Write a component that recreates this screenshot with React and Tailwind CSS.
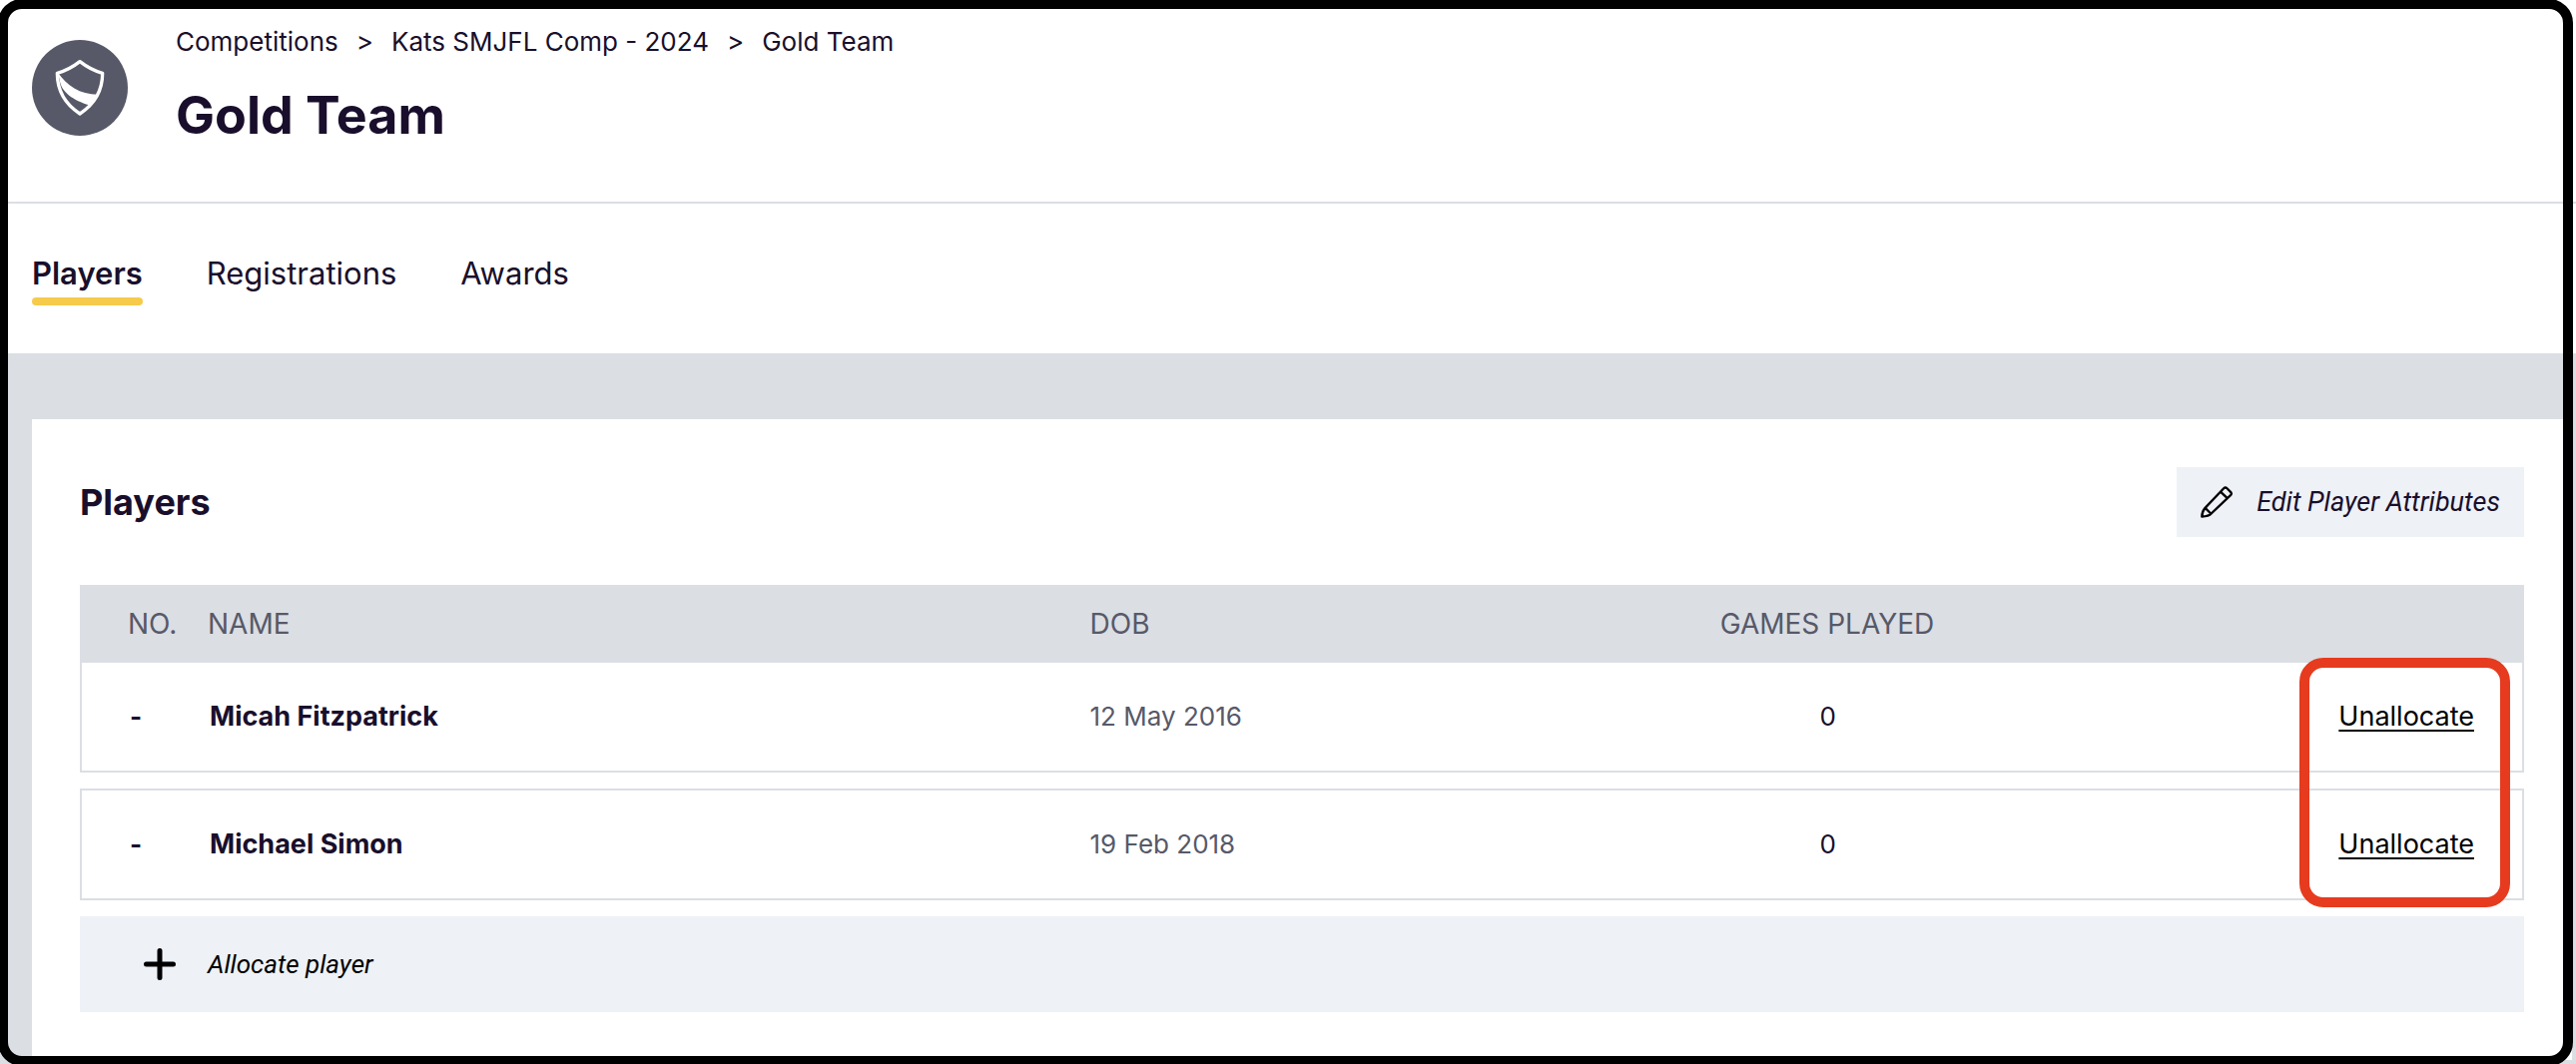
const players = [
  { number: "-", name: "Micah Fitzpatrick", dob: "12 May 2016", games: 0 },
  { number: "-", name: "Michael Simon", dob: "19 Feb 2018", games: 0 },
];

const tabs = ["Players", "Registrations", "Awards"];

function ShieldIcon() {
  return (
    <svg viewBox="144 168 192 192" className="size-16" fill="none" aria-hidden="true">
      <path
        d="M240 185C222 199 198 213 172 220C172 270 194 312 240 342C286 312 308 270 308 220C282 213 258 199 240 185Z"
        stroke="#fff"
        strokeWidth="10"
        strokeLinejoin="round"
      />
      <path d="M174 218C200 256 240 284 294 284L268 316C222 302 184 278 179 240Z" fill="#fff" />
    </svg>
  );
}

function PencilIcon() {
  return (
    <svg
      viewBox="41 31 98 98"
      className="size-8 text-black"
      fill="none"
      stroke="currentColor"
      strokeWidth="7"
      strokeLinejoin="round"
      aria-hidden="true"
    >
      <path d="M55 98L112 38Q117 33 122 38L133 49Q138 54 133 59L73 116Q67 123 45 125Q45 109 55 98Z" />
      <path d="M102 48L123 68M55 98L73 116" />
    </svg>
  );
}

function PlusIcon() {
  return (
    <svg
      viewBox="0 0 32 32"
      className="size-8"
      stroke="currentColor"
      strokeWidth="5"
      strokeLinecap="round"
      aria-hidden="true"
    >
      <path d="M16 2.5V29.5M2.5 16H29.5" />
    </svg>
  );
}

function PageHeader() {
  return (
    <header className="flex gap-12 border-b-2 border-[#dbdee3] bg-white px-8 pt-6 pb-[58px]">
      <div className="mt-4 flex size-24 shrink-0 items-center justify-center rounded-full bg-[#575969]">
        <ShieldIcon />
      </div>
      <div>
        <nav aria-label="Breadcrumb" className="flex gap-[18px] text-[26px] leading-9">
          <a href="#competitions">Competitions</a>
          <span aria-hidden="true">&gt;</span>
          <a href="#competition">Kats SMJFL Comp - 2024</a>
          <span aria-hidden="true">&gt;</span>
          <a href="#team" aria-current="page">Gold Team</a>
        </nav>
        <h1 className="mt-7 text-[52px] leading-14 font-bold">Gold Team</h1>
      </div>
    </header>
  );
}

function TabBar() {
  return (
    <nav aria-label="Team" className="flex gap-16 bg-white px-8 pt-[52px] pb-12 text-[31px] leading-9">
      {tabs.map((tab, i) => (
        <a
          key={tab}
          href={`#${tab.toLowerCase()}`}
          aria-current={i === 0 ? "page" : undefined}
          className={i === 0 ? "font-semibold" : "font-normal"}
        >
          {tab}
          {i === 0 && <span className="mt-1.5 block h-2 rounded-sm bg-[#f6cb4c]" />}
        </a>
      ))}
    </nav>
  );
}

function PlayersTable() {
  return (
    <table className="block">
      <thead className="block bg-[#dbdee3] px-12 text-[28px] leading-9 text-[#575969]">
        <tr className="grid h-[78px] grid-cols-[80px_7fr_5fr_3fr_3fr] items-center text-left">
          <th className="font-normal">NO.</th>
          <th className="font-normal">NAME</th>
          <th className="font-normal">DOB</th>
          <th className="font-normal">GAMES PLAYED</th>
          <th aria-label="Actions" />
        </tr>
      </thead>
      <tbody className="flex flex-col gap-4 text-[26px] leading-9">
        {players.map((p) => (
          <tr
            key={p.name}
            className="grid h-28 grid-cols-[80px_7fr_5fr_3fr_3fr] items-center border-2 border-[#dbdee3] px-[46px] first:h-[110px] first:border-t-0"
          >
            <td className="pl-0.5 font-bold">{p.number}</td>
            <td className="pl-0.5 text-[27px] font-bold">{p.name}</td>
            <td className="text-[#575969]">{p.dob}</td>
            <td>
              <span className="block w-54 text-center">{p.games}</span>
            </td>
            <td className="text-right">
              <button type="button" className="pr-0.5 text-[27px] text-black underline decoration-2 underline-offset-4">
                Unallocate
              </button>
            </td>
          </tr>
        ))}
      </tbody>
    </table>
  );
}

export default function App() {
  return (
    <div className="relative min-h-screen overflow-hidden bg-[#dbdee3] font-['Inter','Liberation_Sans',sans-serif] text-[#190f2c]">
      <PageHeader />
      <TabBar />
      <main className="mt-[66px] mr-1 mb-1 ml-8 bg-white p-12">
        <div className="mb-12 flex items-center justify-between">
          <h2 className="text-4xl font-bold">Players</h2>
          <button
            type="button"
            className="flex h-[70px] items-center gap-6 bg-[#eef1f6] px-6 font-['Roboto',sans-serif] text-[27px] leading-9 italic"
          >
            <PencilIcon />
            Edit Player Attributes
          </button>
        </div>
        <div className="relative">
          <PlayersTable />
          {/* Highlight around the row actions */}
          <div className="pointer-events-none absolute top-[73px] right-3.5 -bottom-[7px] w-[211px] rounded-3xl border-10 border-[#e63b1f]" />
        </div>
        <button
          type="button"
          className="mt-4 flex h-24 w-full items-center gap-8 bg-[#eef1f6] px-16 font-['Roboto',sans-serif] text-[26px] leading-9 text-black italic"
        >
          <PlusIcon />
          Allocate player
        </button>
      </main>
      {/* Frame around the whole page */}
      <div className="pointer-events-none absolute -top-px right-[3px] -bottom-0.5 -left-0.5 rounded-3xl border-10 border-black" />
    </div>
  );
}
